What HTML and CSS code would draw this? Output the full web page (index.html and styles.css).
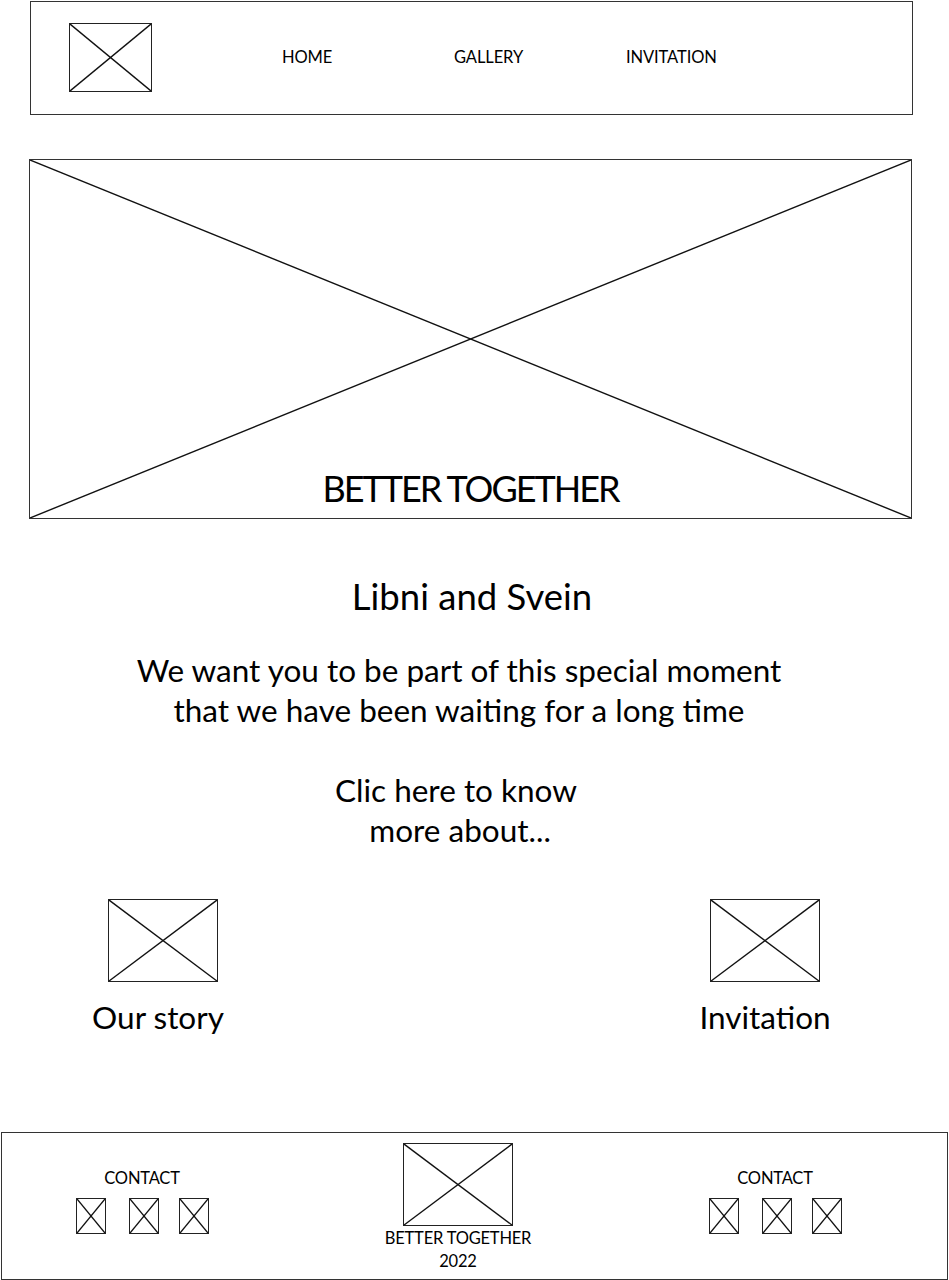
FILE: index.html
```html
<!DOCTYPE html>
<html lang="en">
<head>
<meta charset="utf-8">
<title>Better Together</title>
<link rel="stylesheet" href="styles.css">
</head>
<body>
<header class="topbar">
  <div class="ph logo">
    <svg viewBox="0 0 100 100" preserveAspectRatio="none"><line x1="0" y1="0" x2="100" y2="100"/><line x1="100" y1="0" x2="0" y2="100"/></svg>
  </div>
  <nav class="nav">
    <a class="nav-link">HOME</a>
    <a class="nav-link">GALLERY</a>
    <a class="nav-link">INVITATION</a>
  </nav>
</header>

<section class="hero">
  <svg class="hero-x" viewBox="0 0 100 100" preserveAspectRatio="none"><line x1="0" y1="0" x2="100" y2="100"/><line x1="100" y1="0" x2="0" y2="100"/></svg>
  <h1 class="hero-title">BETTER TOGETHER</h1>
</section>

<main class="intro">
  <h2 class="names">Libni and Svein</h2>
  <p class="message">We want you to be part of this special moment<br>that we have been waiting for a long time</p>
  <p class="more">Clic here to know<br>&nbsp;more about...</p>
</main>

<section class="cards">
  <div class="card">
    <div class="ph card-img">
      <svg viewBox="0 0 100 100" preserveAspectRatio="none"><line x1="0" y1="0" x2="100" y2="100"/><line x1="100" y1="0" x2="0" y2="100"/></svg>
    </div>
    <span class="card-label story">Our story</span>
  </div>
  <div class="card">
    <div class="ph card-img">
      <svg viewBox="0 0 100 100" preserveAspectRatio="none"><line x1="0" y1="0" x2="100" y2="100"/><line x1="100" y1="0" x2="0" y2="100"/></svg>
    </div>
    <span class="card-label">Invitation</span>
  </div>
</section>

<footer class="footer">
  <div class="contact">
    <span class="small-text">CONTACT</span>
    <div class="icons">
      <div class="ph icon"><svg viewBox="0 0 100 100" preserveAspectRatio="none"><line x1="0" y1="0" x2="100" y2="100"/><line x1="100" y1="0" x2="0" y2="100"/></svg></div>
      <div class="ph icon"><svg viewBox="0 0 100 100" preserveAspectRatio="none"><line x1="0" y1="0" x2="100" y2="100"/><line x1="100" y1="0" x2="0" y2="100"/></svg></div>
      <div class="ph icon"><svg viewBox="0 0 100 100" preserveAspectRatio="none"><line x1="0" y1="0" x2="100" y2="100"/><line x1="100" y1="0" x2="0" y2="100"/></svg></div>
    </div>
  </div>
  <div class="brand">
    <div class="ph brand-img"><svg viewBox="0 0 100 100" preserveAspectRatio="none"><line x1="0" y1="0" x2="100" y2="100"/><line x1="100" y1="0" x2="0" y2="100"/></svg></div>
    <span class="small-text">BETTER TOGETHER</span>
    <span class="small-text">2022</span>
  </div>
  <div class="contact">
    <span class="small-text">CONTACT</span>
    <div class="icons">
      <div class="ph icon"><svg viewBox="0 0 100 100" preserveAspectRatio="none"><line x1="0" y1="0" x2="100" y2="100"/><line x1="100" y1="0" x2="0" y2="100"/></svg></div>
      <div class="ph icon"><svg viewBox="0 0 100 100" preserveAspectRatio="none"><line x1="0" y1="0" x2="100" y2="100"/><line x1="100" y1="0" x2="0" y2="100"/></svg></div>
      <div class="ph icon"><svg viewBox="0 0 100 100" preserveAspectRatio="none"><line x1="0" y1="0" x2="100" y2="100"/><line x1="100" y1="0" x2="0" y2="100"/></svg></div>
    </div>
  </div>
</footer>
</body>
</html>
```

FILE: styles.css
```css
html, body {
  margin: 0;
  padding: 0;
  background: #fff;
  overflow: hidden;
}
body {
  font-family: Lato, "Open Sans", sans-serif;
  color: #000;
  width: 949px;
  height: 1280px;
}
svg line {
  stroke: #111;
  stroke-width: 1.4;
  vector-effect: non-scaling-stroke;
}
.ph {
  box-sizing: border-box;
  border: 1.5px solid #222;
  flex: none;
}
.ph svg {
  display: block;
  width: 100%;
  height: 100%;
}

/* header */
.topbar {
  box-sizing: border-box;
  margin: 1px 0 0 30px;
  width: 883px;
  height: 114px;
  border: 1.5px solid #333;
  display: flex;
  align-items: center;
  padding-left: 38px;
}
.logo {
  width: 83px;
  height: 69px;
  margin-top: -2px;
}
.nav {
  display: flex;
  margin-left: 130px;
  margin-top: -2px;
}
.nav-link {
  font-size: 16.5px;
  width: 172px;
  letter-spacing: -0.1px;
}

/* hero */
.hero {
  box-sizing: border-box;
  position: relative;
  margin: 44px 0 0 29px;
  width: 883px;
  height: 360px;
  border: 1.5px solid #333;
  display: flex;
  justify-content: center;
  align-items: flex-end;
}
.hero-x {
  position: absolute;
  inset: 0;
  width: 100%;
  height: 100%;
}
.hero-title {
  position: relative;
  margin: 0 0 8px 0;
  font-weight: 400;
  font-size: 36px;
  line-height: 44px;
  letter-spacing: -2px;
}

/* intro */
.intro {
  width: 949px;
  display: flex;
  flex-direction: column;
  align-items: center;
  text-align: center;
}
.names {
  margin: 56px 0 0 -5px;
  font-weight: 400;
  font-size: 36.5px;
  line-height: 42px;
}
.message {
  margin: 33px 0 0 -31px;
  font-size: 31.5px;
  line-height: 40px;
}
.more {
  margin: 40px 0 0 -37px;
  font-size: 31.5px;
  line-height: 40px;
}

/* cards */
.cards {
  display: flex;
  justify-content: space-between;
  margin: 49px 0 0 0;
  padding: 0 118px 0 97px;
}
.card {
  display: flex;
  flex-direction: column;
  align-items: center;
  width: 132px;
}
.card-img {
  width: 110px;
  height: 83px;
}
.card-label {
  margin-top: 15px;
  font-size: 31.5px;
  line-height: 40px;
  white-space: nowrap;
}
.card-label.story {
  margin-right: 10px;
}

/* footer */
.footer {
  box-sizing: border-box;
  margin: 95px 0 0 1px;
  width: 947px;
  height: 148px;
  border: 1.5px solid #333;
  display: flex;
  align-items: flex-start;
  padding: 10px 0 0 0;
}
.small-text {
  font-size: 16.5px;
  line-height: 23px;
  letter-spacing: -0.2px;
  white-space: nowrap;
}
.contact {
  display: flex;
  flex-direction: column;
  align-items: center;
  margin-top: 24px;
  width: 140px;
}
.contact:first-child {
  margin-left: 70px;
}
.contact:last-child {
  margin-left: 167px;
}
.icons {
  display: flex;
  gap: 20px;
  margin-top: 8px;
}
.icons .icon {
  width: 30px;
  height: 36px;
}
.icons .icon:first-child {
  margin-right: 3px;
}
.brand {
  display: flex;
  flex-direction: column;
  align-items: center;
  margin-left: 166px;
  width: 160px;
}
.brand-img {
  width: 110px;
  height: 83px;
  margin-bottom: 1px;
}
```
